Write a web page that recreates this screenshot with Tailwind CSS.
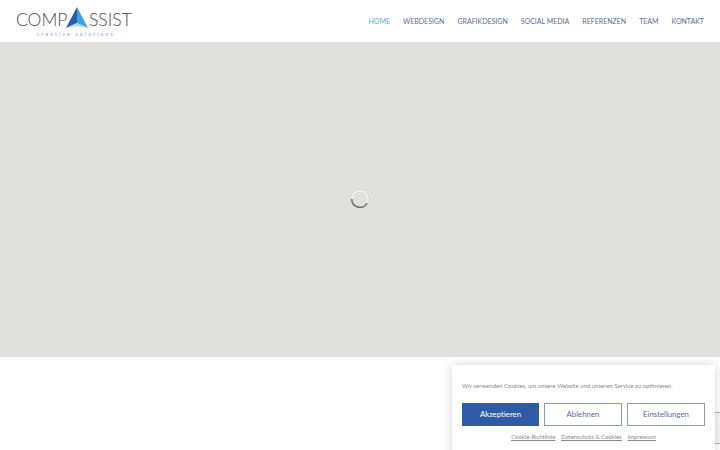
<!doctype html>
<html><head><meta charset="utf-8"><script src="https://cdn.jsdelivr.net/npm/@tailwindcss/browser@4"></script></head>
<body class="relative h-[450px] w-[720px] overflow-hidden bg-white font-['Lato',sans-serif]">
<header class="flex h-[42px] items-center justify-between pl-[16px] pr-[16px]">
  <div class="relative h-[42px] w-[118px]">
    <div class="flex h-[38px] items-center pt-[1px] text-[17.5px] leading-[24px] font-light text-[#4a4a4a]">
      <span class="w-[50px]">COMP</span>
      <svg class="mb-[3px]" width="22" height="22" viewBox="0 0 22 22"><path d="M11 0 L22 21 L11 16Z" fill="#3f9fe0"/><path d="M11 0 L11 16 L0 21Z" fill="#2b5ea8"/><path d="M0 21 L11 16 L22 21 L11 19Z" fill="#a6d6f0"/></svg>
      <span class="ml-[1px]">SSIST</span>
    </div>
    <div class="absolute left-[21px] top-[31px] text-[5px] leading-[6px] tracking-[2.2px] text-[#7fa8d4]">creative solutions</div>
  </div>
  <nav class="flex items-center gap-[13px] text-[7px] font-normal text-[#5a6d96]">
    <a class="text-[#5aabd0]">HOME</a><a>WEBDESIGN</a><a>GRAFIKDESIGN</a><a>SOCIAL MEDIA</a><a>REFERENZEN</a><a>TEAM</a><a>KONTAKT</a>
  </nav>
</header>
<main class="flex h-[315px] items-center justify-center bg-[#e0e0de]">
  <svg width="20" height="20" viewBox="0 0 20 20" fill="none" class="mb-[1px]"><circle cx="10" cy="10" r="8.25" stroke="#f4f4f2" stroke-width="1.5"/><circle cx="10" cy="10" r="9.2" stroke="#d2d2d0" stroke-width="0.6"/><path d="M1.75 10 A8.25 8.25 0 0 0 17.2 14" stroke="#666666" stroke-width="1.5"/></svg>
</main>
<div class="absolute right-0 top-[412px] h-[32px] w-[10px] border-y border-[#b5b5b5] bg-[#f7f7f7]"></div>
<aside class="absolute right-[5px] top-[365px] h-[95px] w-[263px] bg-white px-[10px] pt-[16px] shadow-[0_0_10px_rgba(0,0,0,0.16)]">
  <p class="text-[6px] leading-[9px] whitespace-nowrap text-[#8a8a8a]">Wir verwenden Cookies, um unsere Website und unseren Service zu optimieren.</p>
  <div class="mt-[13px] flex gap-[5px] text-[7.8px]">
    <button class="h-[23px] w-[77px] bg-[#2f5ba6] text-white">Akzeptieren</button>
    <button class="h-[23px] w-[78px] border border-[#8a9cbc] text-[#5a6d96]">Ablehnen</button>
    <button class="h-[23px] w-[78px] border border-[#8a9cbc] text-[#5a6d96]">Einstellungen</button>
  </div>
  <div class="mt-[7px] flex justify-center gap-[6px] text-[5.9px] leading-[8px] text-[#8a8a8a] underline"><a>Cookie-Richtlinie</a><a>Datenschutz &amp; Cookies</a><a>Impressum</a></div>
</aside>
</body></html>
